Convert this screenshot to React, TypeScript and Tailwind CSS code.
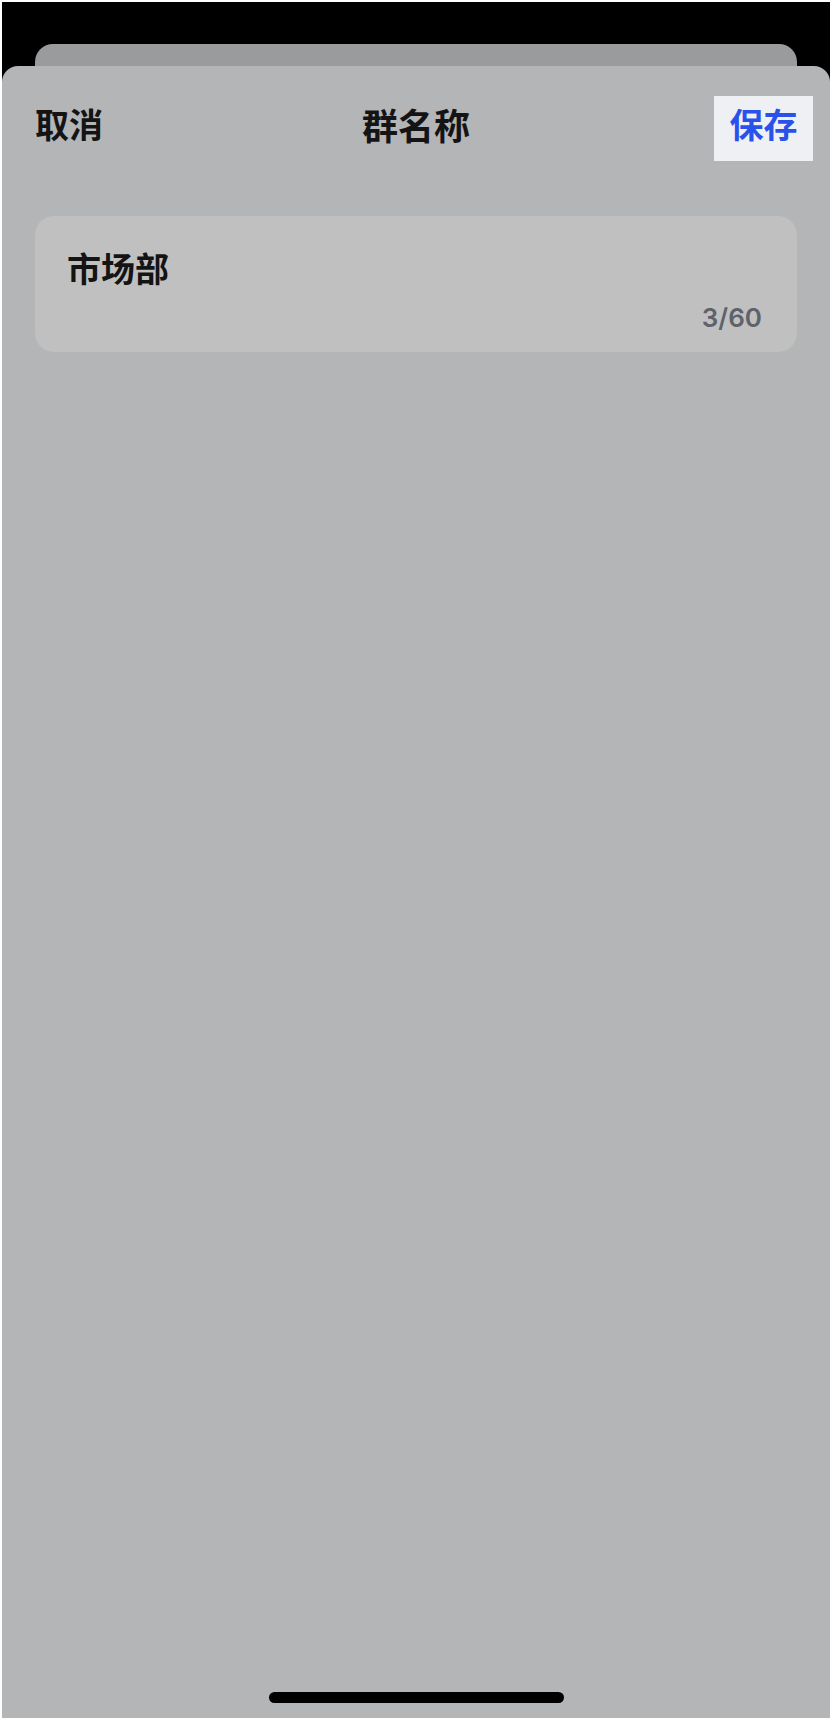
import React from "react";

export default function App() {
  return (
    <div
      className="w-[832px] h-[1720px] bg-white p-[2px] flex flex-col"
      style={{ fontFamily: '"Noto Sans CJK SC", "Noto Sans", sans-serif' }}
    >
      <div className="flex-1 bg-black flex flex-col pt-[42px]">
        <div className="mx-[33px] h-[22px] bg-[#9a9b9c] rounded-t-[18px]" />
        <div className="flex-1 bg-[#b4b5b7] rounded-t-[16px] flex flex-col">
          <div className="relative mt-[30px] h-[65px] flex items-center pl-[33px] pr-[17px]">
            <span className="pb-[9px] text-[34px] leading-[40px] font-semibold text-[#141414]">取消</span>
            <span className="absolute left-1/2 top-0 h-[65px] flex items-center pb-[9px] -translate-x-1/2 text-[36px] leading-[40px] font-semibold text-[#141414]">
              群名称
            </span>
            <button className="ml-auto h-[65px] w-[99px] bg-[#eff0f4] flex items-center justify-center pb-[9px] text-[34px] leading-[40px] font-semibold text-[#2952ea]">
              保存
            </button>
          </div>
          <div className="mx-[33px] mt-[55px] h-[136px] bg-[#c0c0c0] rounded-[19px] flex flex-col px-[32px]">
            <div className="mt-[35px] text-[34px] leading-[34px] font-semibold text-[#141414]">市场部</div>
            <div
              className="mt-auto mb-[21px] mr-[3px] self-end text-[26px] leading-[26px] font-semibold text-[#5e626a]"
              style={{ fontFamily: 'Inter, "Noto Sans", sans-serif' }}
            >
              3/60
            </div>
          </div>
          <div className="mt-auto mb-[15px] mx-auto w-[295px] h-[11px] rounded-full bg-black" />
        </div>
      </div>
    </div>
  );
}
